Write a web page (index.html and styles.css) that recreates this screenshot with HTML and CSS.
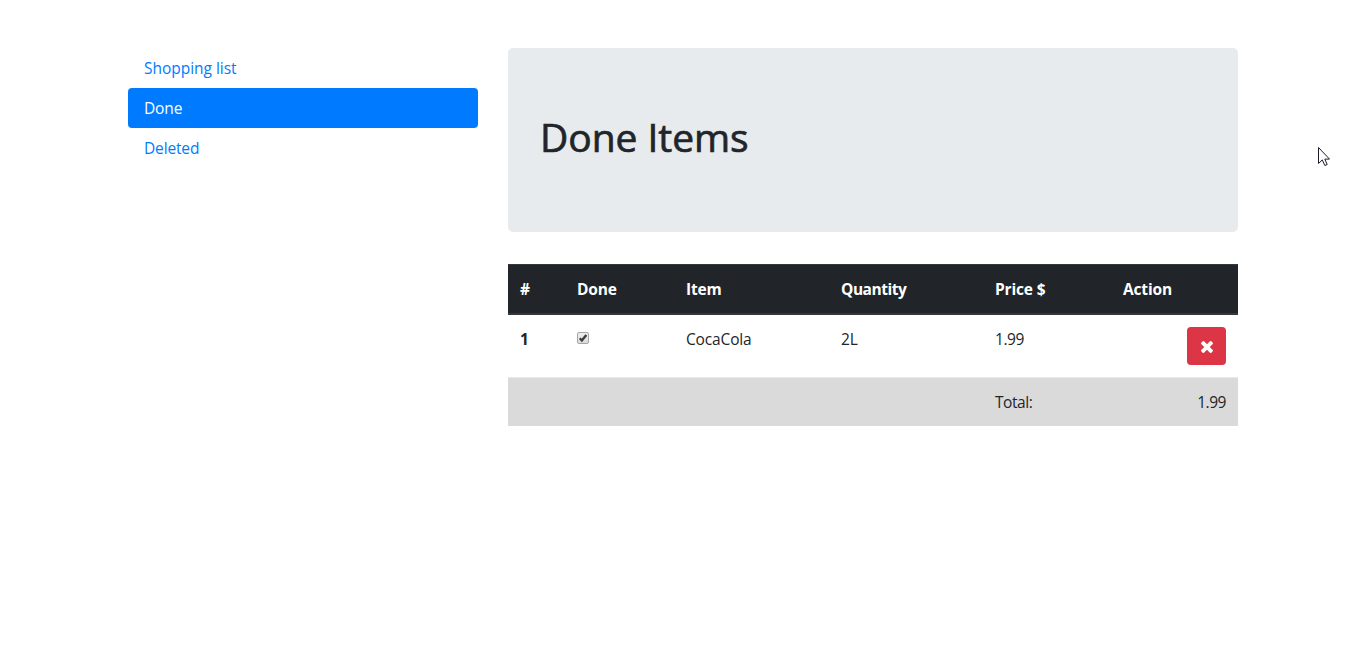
FILE: index.html
```html
<!DOCTYPE html>
<html lang="en">
<head>
<meta charset="utf-8">
<title>Shopping list</title>
<link rel="stylesheet" href="styles.css">
</head>
<body>
<div class="container">
  <nav class="side-nav">
    <a class="nav-link wide" href="#">Shopping list</a>
    <a class="nav-link active" href="#">Done</a>
    <a class="nav-link" href="#">Deleted</a>
  </nav>
  <main class="content">
    <header class="jumbotron"><h1>Done Items</h1></header>
    <table class="items">
      <colgroup><col class="c-num"><col class="c-done"><col class="c-item"><col class="c-qty"><col class="c-price"><col class="c-action"></colgroup>
      <thead>
        <tr><th>#</th><th>Done</th><th>Item</th><th class="tight">Quantity</th><th>Price $</th><th>Action</th></tr>
      </thead>
      <tbody>
        <tr>
          <th>1</th>
          <td><span class="checkbox" role="checkbox" aria-checked="true"><svg viewBox="0 0 12 12"><path d="M2.8 6.2 4.9 8.5 9.3 3" fill="none" stroke="#3c3c3c" stroke-width="2.4"/></svg></span></td>
          <td>CocaCola</td><td>2L</td><td class="tight">1.99</td>
          <td class="right"><button class="btn-danger" aria-label="Delete"><svg viewBox="302 366 1188 1188"><path fill="#fff" d="M1490 1322q0 40-28 68l-136 136q-28 28-68 28t-68-28l-294-294-294 294q-28 28-68 28t-68-28l-136-136q-28-28-28-68t28-68l294-294-294-294q-28-28-28-68t28-68l136-136q28-28 68-28t68 28l294 294 294-294q28-28 68-28t68 28l136 136q28 28 28 68t-28 68l-294 294 294 294q28 28 28 68z"/></svg></button></td>
        </tr>
      </tbody>
      <tfoot>
        <tr><td colspan="4"></td><td class="tight">Total:</td><td class="right tight">1.99</td></tr>
      </tfoot>
    </table>
  </main>
</div>
<svg class="cursor" viewBox="0 0 12 20"><path d="M.5.5v16l3.8-3.6 2.5 5.6 2.4-1-2.4-5.4h4.7z" fill="#fff" stroke="#1c1c2c"/></svg>
</body>
</html>
```
FILE: styles.css
```css
* { box-sizing: border-box; }
body {
  margin: 0;
  background: #fff;
  color: #212529;
  font: 400 15.5px/24px "Open Sans", "Noto Sans", sans-serif;
  letter-spacing: -0.15px;
}
.container {
  display: flex;
  gap: 30px;
  width: 1110px;
  margin: 48px auto 0;
}
.side-nav { width: 350px; }
.nav-link {
  display: block;
  padding: 8px 16px;
  border-radius: 4px;
  color: #007bff;
  text-decoration: none;
}
.nav-link.wide { letter-spacing: -0.03px; }
.nav-link.active { background: #007bff; color: #fff; }
.content { width: 730px; }
.jumbotron {
  height: 184px;
  margin-bottom: 32px;
  padding: 65px 32px 63px;
  border-radius: 5px;
  background: #e7ebee;
}
h1 {
  margin: 0;
  font-size: 39px;
  font-weight: 500;
  line-height: 48px;
  letter-spacing: -0.05px;
  -webkit-text-stroke: 0.7px #212529;
}
.items {
  width: 730px;
  table-layout: fixed;
  border-collapse: separate;
  border-spacing: 0;
}
.c-num { width: 57px; }
.c-done { width: 109px; }
.c-item { width: 155px; }
.c-qty { width: 154px; }
.c-price { width: 128px; }
.c-action { width: 127px; }
th, td { padding: 12px; text-align: left; vertical-align: top; }
th { font-weight: 700; }
thead th {
  border-top: 1px solid #32383e;
  border-bottom: 2px solid #32383e;
  background: #212529;
  color: #fff;
}
tfoot td { border-top: 1px solid #e6e8ea; background: #dadada; }
.items .right { text-align: right; }
.items .tight { letter-spacing: -0.45px; }
.checkbox {
  display: block;
  width: 12px;
  height: 12px;
  margin-top: 5px;
  border: 1px solid #a6a6a6;
  border-radius: 2px;
  background: linear-gradient(#eee, #dcdcdc);
}
.checkbox svg { display: block; width: 12px; height: 12px; margin: -1px; }
.btn-danger {
  display: inline-flex;
  align-items: center;
  justify-content: center;
  width: 39px;
  height: 38px;
  padding: 1px 0 0;
  border: 0;
  border-radius: 4px;
  background: #dc3545;
  vertical-align: top;
}
.btn-danger svg { width: 12px; height: 12px; }
.cursor { position: absolute; left: 1318px; top: 147px; width: 12px; height: 20px; }
```
